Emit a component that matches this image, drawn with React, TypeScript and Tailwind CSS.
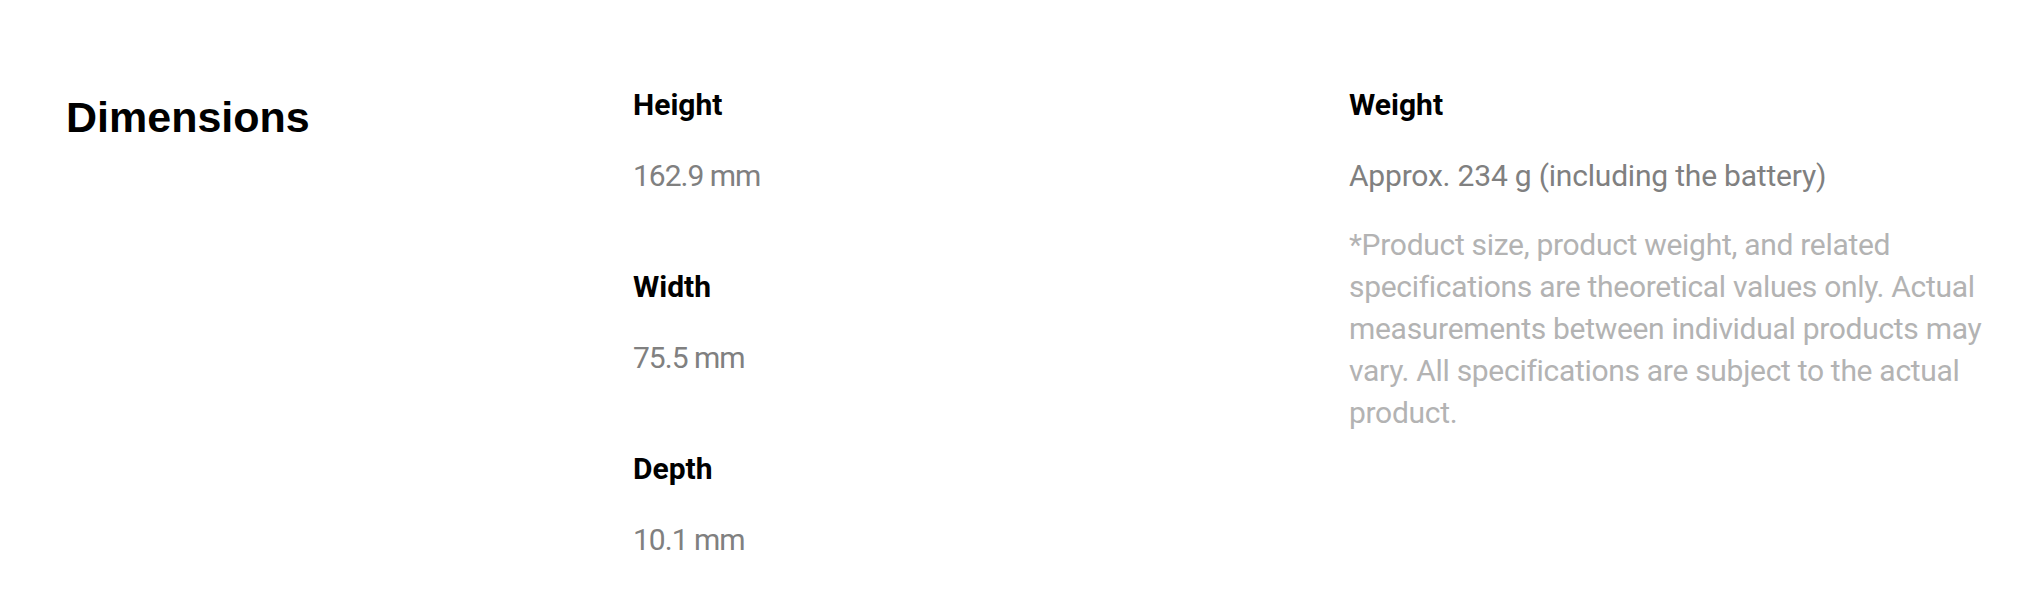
const specs = [
  { label: 'Height', value: '162.9 mm' },
  { label: 'Width', value: '75.5 mm' },
  { label: 'Depth', value: '10.1 mm' },
];

export default function App() {
  return (
    <div className="h-[610px] w-full bg-white font-['Roboto',sans-serif]">
      <div className="flex pl-[66px] pr-[54px] pt-[87px]">
        <div className="w-[567px] shrink-0">
          <h2 className="mt-[6px] font-['Liberation_Sans',Arial,sans-serif] text-[43px] font-bold leading-[48px] text-black">
            Dimensions
          </h2>
        </div>
        <div className="w-[716px] shrink-0">
          {specs.map((s, i) => (
            <div key={s.label} className={i > 0 ? 'mt-[73px]' : ''}>
              <div className="text-[30px] font-bold leading-[36px] text-black">{s.label}</div>
              <div className="mt-[33px] text-[30px] leading-[40px] tracking-[-1px] text-[#808080]">{s.value}</div>
            </div>
          ))}
        </div>
        <div className="flex-1">
          <div className="text-[30px] font-bold leading-[36px] text-black">Weight</div>
          <div className="mt-[33px] text-[30px] leading-[40px] tracking-[-0.2px] text-[#808080]">
            Approx. 234 g (including the battery)
          </div>
          <p className="mt-[28px] text-[30px] leading-[42px] tracking-[-0.3px] text-[#b3b3b3]">
            *Product size, product weight, and related specifications are theoretical values only. Actual measurements between individual products may vary. All specifications are subject to the actual product.
          </p>
        </div>
      </div>
    </div>
  );
}
